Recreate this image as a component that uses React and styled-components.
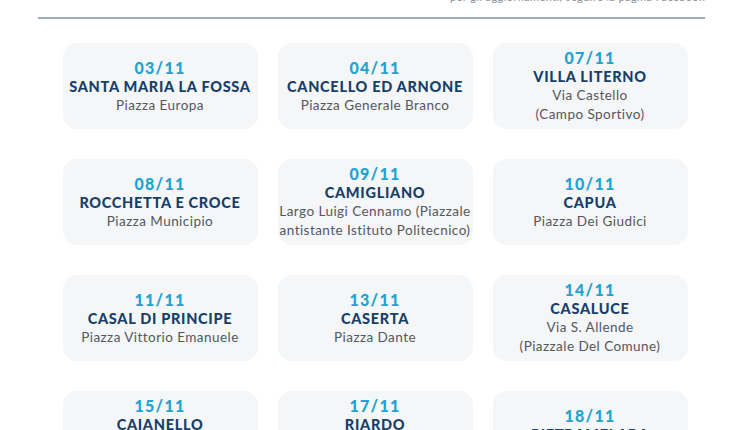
import React from "react";
import styled, { createGlobalStyle } from "styled-components";

const Global = createGlobalStyle`
  html, body { margin: 0; padding: 0; background: #ffffff; }
  body { font-family: "Lato", "Open Sans", sans-serif; }
`;

const Page = styled.div`
  width: 750px;
  height: 430px;
  overflow: hidden;
  background: #fff;
`;

const TopClip = styled.div`
  height: 6px;
  overflow: hidden;
  display: flex;
  justify-content: flex-end;
  align-items: flex-start;
  padding-right: 45px;
`;

const TopText = styled.div`
  font-family: "Lato", sans-serif;
  font-size: 11px;
  line-height: 14px;
  color: #8d9196;
  white-space: nowrap;
  margin-top: -10px;
  letter-spacing: 0.4px;
`;

const Rule = styled.div`
  margin: 11px 45px 0 38px;
  height: 2px;
  background: #a3abb0;
`;

const Grid = styled.div`
  display: grid;
  grid-template-columns: repeat(3, 195px);
  grid-auto-rows: 86px;
  column-gap: 20px;
  row-gap: 30px;
  justify-content: center;
  margin-top: 24px;
`;

const Card = styled.div`
  background: #f4f6f8;
  border-radius: 14px;
  display: flex;
  flex-direction: column;
  align-items: center;
  justify-content: center;
  text-align: center;
  padding: 0 2px;
`;

const DateText = styled.div`
  font-family: "Lato", sans-serif;
  font-weight: 900;
  font-size: 16px;
  line-height: 19px;
  color: #22a3cf;
  letter-spacing: 1.3px;
`;

const Name = styled.div`
  font-family: "Lato", sans-serif;
  font-weight: 900;
  font-size: 14.5px;
  line-height: 19px;
  color: #173f69;
  white-space: nowrap;
  letter-spacing: 0.7px;
`;

const Address = styled.div`
  font-family: "Lato", sans-serif;
  font-weight: 400;
  font-size: 13.5px;
  line-height: 19px;
  color: #53585d;
  white-space: nowrap;
  letter-spacing: 0.45px;
`;

const events = [
  { date: "03/11", name: "SANTA MARIA LA FOSSA", addr: ["Piazza Europa"] },
  { date: "04/11", name: "CANCELLO ED ARNONE", addr: ["Piazza Generale Branco"] },
  { date: "07/11", name: "VILLA LITERNO", addr: ["Via Castello", "(Campo Sportivo)"] },
  { date: "08/11", name: "ROCCHETTA E CROCE", addr: ["Piazza Municipio"] },
  { date: "09/11", name: "CAMIGLIANO", addr: ["Largo Luigi Cennamo (Piazzale", "antistante Istituto Politecnico)"] },
  { date: "10/11", name: "CAPUA", addr: ["Piazza Dei Giudici"] },
  { date: "11/11", name: "CASAL DI PRINCIPE", addr: ["Piazza Vittorio Emanuele"] },
  { date: "13/11", name: "CASERTA", addr: ["Piazza Dante"] },
  { date: "14/11", name: "CASALUCE", addr: ["Via S. Allende", "(Piazzale Del Comune)"] },
  { date: "15/11", name: "CAIANELLO", addr: ["Piazza Municipio", "(Centro)"] },
  { date: "17/11", name: "RIARDO", addr: ["Piazza Municipio", "(Centro)"] },
  { date: "18/11", name: "PIETRAMELARA", addr: ["Piazza Municipio"] },
];

export default function App() {
  return (
    <Page>
      <Global />
      <TopClip>
        <TopText>per gli aggiornamenti, seguire la pagina Facebook</TopText>
      </TopClip>
      <Rule />
      <Grid>
        {events.map((e) => (
          <Card key={e.date}>
            <DateText>{e.date}</DateText>
            <Name>{e.name}</Name>
            {e.addr.map((a) => (
              <Address key={a}>{a}</Address>
            ))}
          </Card>
        ))}
      </Grid>
    </Page>
  );
}
